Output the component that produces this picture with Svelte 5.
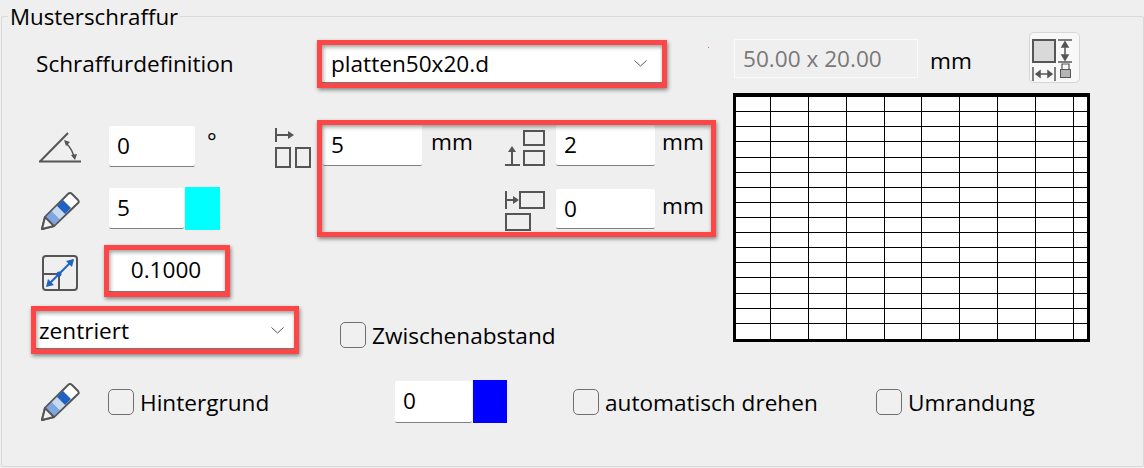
<script>
  const vLines = [770, 808, 846, 884, 921, 959, 997, 1035, 1073].map((x) => x - 733);
  const hLines = [111, 126, 141, 157, 172, 187, 202, 217, 232, 247, 262, 277, 293, 308, 323].map((y) => y - 93);
</script>

{#snippet pen()}
  <svg class="pen" width="39" height="39" viewBox="0 0 39 39">
    <path d="M1 38 L4 26 L27 3 Q29 1 31 3 L37 9 Q38.500 11 37 12 L13 35 Z" fill="#fff" stroke="#555" stroke-width="2" stroke-linejoin="round"/>
    <path d="M5 26 L13 34 L19 28 L11 20 Z" fill="#7ea6e0"/>
    <path d="M11 20 L19 28 L24 23 L16 15 Z" fill="#c6d9f1"/>
    <path d="M16 15 L24 23 L30 17 L22 9 Z" fill="#1f62c4"/>
    <path d="M1 38 L4 26 L13 35 Z" fill="#f2f2f2" stroke="#555" stroke-width="2" stroke-linejoin="round"/>
  </svg>
{/snippet}

{#snippet check(label)}
  <label class="check"><span class="box"></span><span>{label}</span></label>
{/snippet}

<div class="panel">
  <div class="group">
    <div class="legend">Musterschraffur</div>

    <div class="top">
      <div class="def-label">Schraffurdefinition</div>
      <div class="red combo-big">
        <div class="combo"><span>platten50x20.d</span>
          <svg class="chev" width="13" height="7" viewBox="0 0 13 7"><path d="M.5 .5 L6.500 6 L12.500 .5" fill="none" stroke="#555" stroke-width="1"/></svg>
        </div>
      </div>
      <span class="dot"></span>
      <div class="readout">50.00 x 20.00</div>
      <div class="unit unit-top">mm</div>
      <button class="iconbtn" aria-label="Größe">
        <svg width="50" height="50" viewBox="0 0 50 50">
          <rect x="4" y="7" width="22" height="22" fill="#d9d9d9" stroke="#555" stroke-width="2"/>
          <path d="M4 34 V48 M26 34 V48 M7 41 H23 M7 41 l4 -3 v6 z M23 41 l-4 -3 v6 z" fill="#555" stroke="#555" stroke-width="1.500"/>
          <path d="M29 7 H43 M29 29 H43 M36 10 V26 M36 9 l-3 5 h6 z M36 27 l-3 -5 h6 z" fill="#555" stroke="#555" stroke-width="1.500"/>
          <path d="M33 37 V31 H40 V37" fill="none" stroke="#555" stroke-width="1.200"/>
          <rect x="31.500" y="36.500" width="10" height="8" fill="#b5b5b5" stroke="#555"/>
        </svg>
      </button>
    </div>

    <div class="body">
      <div class="left">
        <div class="upper">
          <div class="props">
            <div class="row row-angle">
              <svg class="ic-angle" width="42" height="31" viewBox="0 0 42 31">
                <path d="M1 29.500 L29 1 M0 29.500 H42" fill="none" stroke="#555" stroke-width="2"/>
                <path d="M27 11 Q34 18 35 26" fill="none" stroke="#555" stroke-width="1.500"/>
                <path d="M25 8 L31 10 L27 14 Z M36 28 L32 23 L38 22 Z" fill="#555"/>
              </svg>
              <div class="field f86">0</div>
              <span class="deg">°</span>
              <svg class="ic-hgap" width="36" height="40" viewBox="0 0 36 40">
                <path d="M1 0 V14 M1 7 H13" fill="none" stroke="#555" stroke-width="2"/>
                <path d="M13 3 L19 7 L13 11 Z" fill="#555"/>
                <rect x="1" y="20" width="14" height="19" fill="none" stroke="#555" stroke-width="2"/>
                <rect x="21" y="20" width="14" height="19" fill="none" stroke="#555" stroke-width="2"/>
              </svg>
            </div>
            <div class="row row-pen">
              {@render pen()}
              <div class="field f75">5</div>
              <div class="swatch cyan"></div>
            </div>
            <div class="row row-scale">
              <svg class="ic-scale" width="36" height="36" viewBox="0 0 36 36">
                <rect x="1" y="1" width="34" height="34" rx="3" fill="none" stroke="#555" stroke-width="2"/>
                <path d="M1 19 H17 V35" fill="none" stroke="#555" stroke-width="2"/>
                <path d="M6 30 L31 5" stroke="#1f62c4" stroke-width="2"/>
                <path d="M32 4 L24 6 L30 12 Z M4 32 L12 30 L6 24 Z" fill="#1f62c4"/>
                <circle cx="17" cy="19" r="2.500" fill="#1f62c4"/>
              </svg>
              <div class="red scale-red"><div class="scale-val">0.1000</div></div>
            </div>
          </div>

          <div class="red spacing">
            <div class="sp-col1">
              <div class="field f99">5</div>
              <span class="unit sp-unit">mm</span>
            </div>
            <div class="sp-col2">
              <div class="sp-row">
                <svg class="ic-vgap" width="41" height="38" viewBox="0 0 41 38">
                  <rect x="20" y="2" width="20" height="14" fill="none" stroke="#555" stroke-width="2"/>
                  <rect x="20" y="22" width="20" height="14" fill="none" stroke="#555" stroke-width="2"/>
                  <path d="M1 36 H16 M8 36 V22" fill="none" stroke="#555" stroke-width="2"/>
                  <path d="M4 23 L8 17 L12 23 Z" fill="#555"/>
                </svg>
                <div class="field f99">2</div>
                <span class="unit">mm</span>
              </div>
              <div class="sp-row sp-row2">
                <svg class="ic-off" width="41" height="41" viewBox="0 0 41 41">
                  <path d="M2 1 V19 M2 10 H9" fill="none" stroke="#555" stroke-width="2"/>
                  <path d="M9 6 L15 10 L9 14 Z" fill="#555"/>
                  <rect x="16" y="2" width="24" height="16" fill="none" stroke="#555" stroke-width="2"/>
                  <rect x="2" y="24" width="24" height="16" fill="none" stroke="#555" stroke-width="2"/>
                </svg>
                <div class="field f99">0</div>
                <span class="unit">mm</span>
              </div>
            </div>
          </div>
        </div>

        <div class="lower">
          <div class="red combo-small">
            <div class="combo"><span>zentriert</span>
              <svg class="chev" width="13" height="7" viewBox="0 0 13 7"><path d="M.5 .5 L6.500 6 L12.500 .5" fill="none" stroke="#555" stroke-width="1"/></svg>
            </div>
          </div>
          <div class="gapcheck">{@render check('Zwischenabstand')}</div>
        </div>
      </div>

      <svg class="preview" width="357" height="249" viewBox="0 0 357 249">
        <rect width="357" height="249" fill="#000"/>
        <rect x="3" y="4" width="351" height="242" fill="#fff"/>
        {#each vLines as x}<rect x={x} y="3" width="1" height="243"/>{/each}
        {#each hLines as y}<rect x="3" y={y} width="351" height="1"/>{/each}
      </svg>
    </div>

    <div class="bottom">
      {@render pen()}
      <div class="b1">{@render check('Hintergrund')}</div>
      <div class="field f77">0</div>
      <div class="swatch blue"></div>
      <div class="b2">{@render check('automatisch drehen')}</div>
      <div class="b3">{@render check('Umrandung')}</div>
    </div>
  </div>
</div>

<style>
  :global(body) { margin: 0; background: #efefef; }
  .panel {
    width: 1144px; height: 468px; box-sizing: border-box; padding: 16px 0 1px 1px;
    font-family: "Open Sans", "Noto Sans", sans-serif; font-size: 22.600px; color: #000;
    background: #efefef; overflow: hidden;
  }
  .group { height: 100%; box-sizing: border-box; border: 1px solid #dadada; border-radius: 2px; }
  .legend { width: fit-content; margin: -14px 0 0 6px; padding: 0 2px; background: #efefef; line-height: 28px; height: 28px; font-size: 22.300px; }

  .top { display: flex; align-items: flex-start; margin-top: 1px; height: 56px; padding-left: 34px; }
  .def-label { width: 281px; margin-top: 17px; line-height: 30px; }
  .combo-big { width: 350px; height: 48px; margin-top: 8px; }
  .dot { width: 1px; height: 1px; margin: 15px 0 0 41px; background: #f55; }
  .readout {
    width: 184px; height: 39px; margin: 7px 0 0 25px; box-sizing: border-box; border: 1px solid #f9f9f9;
    color: #787878; line-height: 37px; padding-left: 8px;
  }
  .unit { line-height: 30px; }
  .unit-top { margin: 14px 0 0 12px; width: 99px; }
  .iconbtn {
    width: 51px; height: 51px; padding: 0; box-sizing: border-box; background: #f8f8f8;
    border: 1px solid #d6d6d6; border-radius: 5px; display: block;
  }
  .iconbtn svg { display: block; margin: 0 0 0 -1px; }

  .body { display: flex; align-items: flex-start; margin-top: 5px; }
  .left { width: 731px; padding-top: 27px; }
  .upper { display: flex; align-items: flex-start; }
  .props { width: 315px; padding-top: 6px; }
  .row { display: flex; align-items: flex-start; }
  .row-angle { height: 61px; padding-left: 37px; }
  .ic-angle { margin: 6px 28px 0 0; }
  .deg { margin-left: 12px; width: 68px; line-height: 30px; }
  .ic-hgap { margin: 2px 0 0 0; }
  .row-pen { height: 58px; padding-left: 39px; }
  .row-pen .pen { margin: 4px 29px 0 0; }
  .row-pen .field { margin-top: 1px; }
  .row-scale { padding-left: 40px; }
  .ic-scale { margin: 10px 26px 0 0; }

  .field {
    box-sizing: border-box; background: #fff; border-bottom: 1px solid #808080; border-radius: 2px;
    height: 41px; line-height: 39px; padding-left: 8px;
  }
  .f86 { width: 86px; }
  .f75 { width: 75px; }
  .f99 { width: 99px; }
  .f77 { width: 77px; height: 42px; }
  .swatch { width: 35px; height: 43px; margin-left: 1px; }
  .cyan { background: #0ff; }
  .blue { background: #00f; width: 34px; }

  .red {
    position: relative; box-sizing: border-box; border: 5px solid #ff4646;
    box-shadow: 1px 2px 4px rgba(0, 0, 0, .45);
  }
  .red::after {
    content: ""; position: absolute; inset: 0; pointer-events: none;
    box-shadow: inset 1px 2px 4px rgba(0, 0, 0, .4);
  }
  .scale-red { width: 126px; height: 52px; }
  .scale-val { height: 100%; background: #fff; text-align: center; line-height: 40px; padding-right: 2px; border-bottom: 1px solid #808080; box-sizing: border-box; }
  .combo {
    height: 100%; box-sizing: border-box; background: #fff; display: flex; align-items: center;
    justify-content: space-between; border-bottom: 1px solid #808080; padding: 0 10px 0 3px;
  }
  .combo-small .combo { padding-top: 2px; }
  .combo-big .combo { padding-left: 9px; padding-right: 15px; }
  .chev { flex: none; }

  .spacing { width: 399px; height: 117px; display: flex; align-items: flex-start; }
  .sp-col1 { display: flex; align-items: flex-start; padding-left: 1px; width: 181px; flex: none; }
  .sp-unit { margin-left: 9px; }
  .sp-col1 .unit, .sp-row .unit { line-height: 30px; margin-top: 2px; }
  .sp-row { display: flex; align-items: flex-start; height: 64px; }
  .sp-row .unit { margin-left: 7px; }
  .ic-vgap { margin: 4px 11px 0 0; flex: none; }
  .ic-off { margin: 1px 11px 0 0; flex: none; }
  .sp-row2 { height: auto; }
  .sp-row2 .field { height: 40px; }

  .lower { display: flex; align-items: flex-start; margin-top: 9px; padding-left: 29px; }
  .combo-small { width: 268px; height: 48px; }
  .gapcheck { margin: 14px 0 0 41px; }

  .preview { display: block; }

  .check { display: flex; align-items: center; gap: 6px; line-height: 30px; }
  .check span:last-child { position: relative; top: 1px; }
  .box {
    width: 26px; height: 26px; box-sizing: border-box; border: 1px solid #707070; border-radius: 5px;
    background: #f0f0f0; flex: none;
  }

  .bottom { display: flex; align-items: center; margin-top: 26px; padding-left: 39px; height: 43px; }
  .b1 { margin: 0 0 0 28px; width: 287px; }
  .b2 { margin-left: 66px; width: 303px; }
</style>
